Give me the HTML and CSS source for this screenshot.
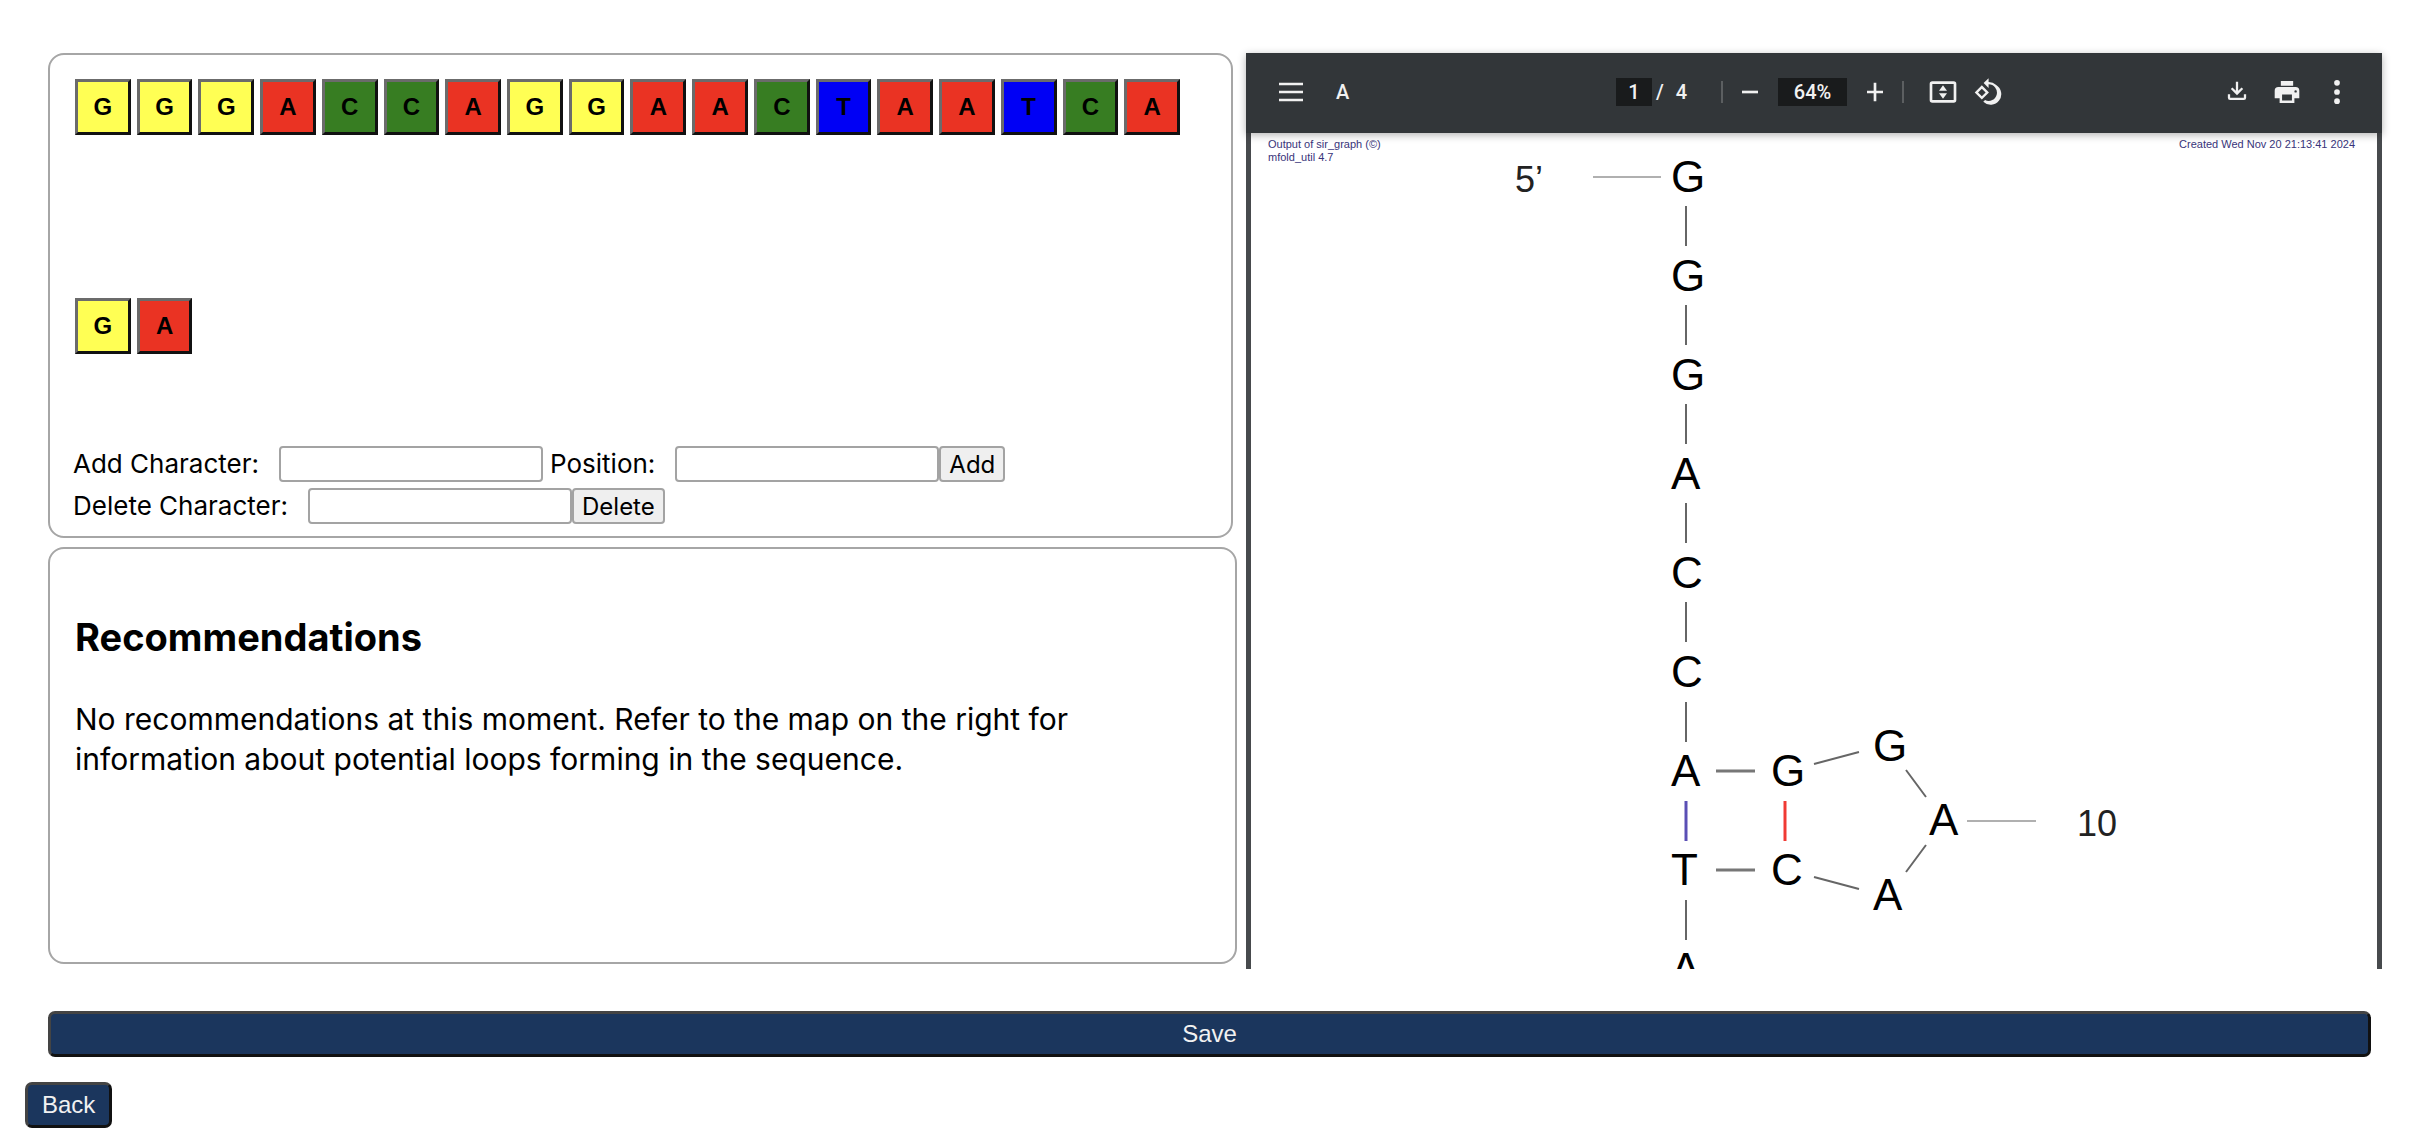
FILE: index.html
```html
<!DOCTYPE html>
<html lang="en">
<head>
<meta charset="utf-8">
<meta name="viewport" content="width=device-width, initial-scale=1">
<title>Sequence editor</title>
<link rel="stylesheet" href="styles.css">
</head>
<body>
<main class="page">
  <div class="workspace">
    <div class="editor">
      <section class="panel sequence-panel" aria-label="Sequence">
        <div class="sequence">
          <button class="base base-g">G</button>
          <button class="base base-g">G</button>
          <button class="base base-g">G</button>
          <button class="base base-a">A</button>
          <button class="base base-c">C</button>
          <button class="base base-c">C</button>
          <button class="base base-a">A</button>
          <button class="base base-g">G</button>
          <button class="base base-g">G</button>
          <button class="base base-a">A</button>
          <button class="base base-a">A</button>
          <button class="base base-c">C</button>
          <button class="base base-t">T</button>
          <button class="base base-a">A</button>
          <button class="base base-a">A</button>
          <button class="base base-t">T</button>
          <button class="base base-c">C</button>
          <button class="base base-a">A</button>
          <button class="base base-g">G</button>
          <button class="base base-a">A</button>
        </div>
        <form class="edit-form">
          <div class="form-row">
            <label for="add-char">Add Character:</label>
            <input class="field" id="add-char" type="text">
            <label class="label-next" for="add-pos">Position:</label>
            <input class="field" id="add-pos" type="text">
            <button class="form-button" type="button">Add</button>
          </div>
          <div class="form-row">
            <label for="del-char">Delete Character:</label>
            <input class="field" id="del-char" type="text">
            <button class="form-button" type="button">Delete</button>
          </div>
        </form>
      </section>
      <section class="panel recommendations">
        <h2>Recommendations</h2>
        <p>No recommendations at this moment. Refer to the map on the right for information about potential loops forming in the sequence.</p>
      </section>
    </div>

    <section class="viewer" aria-label="Structure map">
      <div class="toolbar">
        <div class="tools">
          <button class="icon-button" aria-label="Menu"><svg viewBox="0 0 24 24"><path d="M3 5h18v2H3zM3 11h18v2H3zM3 17h18v2H3z"/></svg></button>
          <span class="doc-title">A</span>
        </div>
        <div class="tools tools-center">
          <input class="page-input" type="text" value="1" aria-label="Page">
          <span class="page-total"><span>/</span><span>4</span></span>
          <span class="divider"></span>
          <button class="icon-button" aria-label="Zoom out"><svg viewBox="0 0 24 24"><path d="M6 11h12v2H6z"/></svg></button>
          <input class="zoom-input" type="text" value="64%" aria-label="Zoom">
          <button class="icon-button" aria-label="Zoom in"><svg viewBox="0 0 24 24"><path d="M11 5h2v6h5v2h-5v6h-2v-6H6v-2h5z"/></svg></button>
          <span class="divider"></span>
          <button class="icon-button" aria-label="Fit to page"><svg viewBox="0 0 24 24"><path fill-rule="evenodd" d="M4 4h16q2 0 2 2v12q0 2-2 2H4q-2 0-2-2V6q0-2 2-2zM4 6v12h16V6zM12 7l3 4H9zM12 17l-3-4h6z"/></svg></button>
          <button class="icon-button" aria-label="Rotate"><svg viewBox="-1 -1 27 27"><path fill-rule="evenodd" d="M7.3 6.9l-6 6 6 6 6-6zM4.100 12.900l3.200-3.200 3.200 3.200-3.200 3.200z"/><path d="M19.400 6.600A9 9 0 0 0 13 4V.8L8.800 5 13 9.200V6a7 7 0 1 1-3 13.300l-1.500 1.500A9 9 0 1 0 19.400 6.600z"/></svg></button>
        </div>
        <div class="tools tools-right">
          <button class="icon-button" aria-label="Download"><svg viewBox="-2 -1 28 28"><path d="M11 4h2v8l3-3 1.400 1.400L12 15.800l-5.400-5.400L8 9l3 3zM6 15v3h12v-3h2v3q0 2-2 2H6q-2 0-2-2v-3z"/></svg></button>
          <button class="icon-button" aria-label="Print"><svg viewBox="-1 -1 26 26"><path fill-rule="evenodd" d="M7 3h10v4H7zM5 8h14q3 0 3 3v6h-4v4H6v-4H2v-6q0-3 3-3zM8 14v5h8v-5zM19 10.500a1 1 0 1 0 0 2 1 1 0 0 0 0-2z"/></svg></button>
          <button class="icon-button" aria-label="More"><svg viewBox="-2 -2 28 28"><circle cx="12" cy="4" r="2.500"/><circle cx="12" cy="12" r="2.500"/><circle cx="12" cy="20" r="2.500"/></svg></button>
        </div>
      </div>
      <svg class="map" viewBox="1251 133 1126 836" role="img" aria-label="Folded sequence">
        <g class="map-note">
          <text x="1268" y="148">Output of sir_graph (©)</text>
          <text x="1268" y="161">mfold_util 4.7</text>
          <text x="2355" y="148" text-anchor="end">Created Wed Nov 20 21:13:41 2024</text>
        </g>
        <g class="map-index">
          <text x="1515" y="192">5’</text>
          <text x="2077" y="836">10</text>
        </g>
        <path class="tick" d="M1593 177H1661M1967 821H2036"/>
        <path class="bond" d="M1686 206v40M1686 305v40M1686 404v40M1686 503v40M1686 602v40M1686 702v40M1686 900v40M1814 764l45-12M1906 770l20 27M1926 845l-20 27M1814 877l45 12"/>
        <path class="bond bond-thick" d="M1716 771h39M1716 870h39"/>
        <path class="pair-at" d="M1686 801v40"/>
        <path class="pair-gc" d="M1785 801v40"/>
        <g class="map-base">
          <text x="1671" y="192">G</text>
          <text x="1671" y="291">G</text>
          <text x="1671" y="390">G</text>
          <text x="1671" y="489">A</text>
          <text x="1671" y="588">C</text>
          <text x="1671" y="687">C</text>
          <text x="1671" y="786">A</text>
          <text x="1671" y="885">T</text>
          <text x="1671" y="984">A</text>
          <text x="1771" y="786">G</text>
          <text x="1771" y="885">C</text>
          <text x="1873" y="761">G</text>
          <text x="1929" y="835">A</text>
          <text x="1873" y="910">A</text>
        </g>
      </svg>
    </section>
  </div>
  <button class="action save">Save</button>
  <button class="action back">Back</button>
</main>
</body>
</html>
```
FILE: styles.css
```css
* { box-sizing: border-box; }

body {
  margin: 0;
  background: #fff;
  color: #000;
  font-family: Inter, "Noto Sans", sans-serif;
}

button, input { font-family: "Liberation Sans", Arial, sans-serif; }

.page {
  display: flex;
  flex-direction: column;
  padding: 53px 36px 16px 48px;
}

.workspace {
  display: grid;
  grid-template-columns: 1189fr 1136fr;
  gap: 9px;
}

.editor {
  display: flex;
  flex-direction: column;
  gap: 9px;
  padding-bottom: 5px;
}

.panel {
  border: 2px solid #a6a6a6;
  border-radius: 16px;
}

.sequence-panel {
  margin-right: 4px;
  padding: 24px 51px 12px 25px;
}

.sequence {
  display: grid;
  grid-template-columns: repeat(18, 1fr);
  gap: 163px 6px;
}

.base {
  height: 56px;
  padding: 0;
  border: 3px solid;
  border-color: #6b6b6b #111 #111 #6b6b6b;
  color: #000;
  font-size: 24px;
  font-weight: bold;
}

.base-g { background: #ffff54; }
.base-a { background: #ea3323; }
.base-c { background: #377d22; }
.base-t { background: #0000f5; }

.edit-form {
  display: flex;
  flex-direction: column;
  gap: 6px;
  margin-top: 92px;
  margin-left: -2px;
}

.form-row {
  display: flex;
  align-items: center;
  font-size: 26px;
  line-height: 36px;
}

.field {
  width: 264px;
  height: 36px;
  margin-left: 20px;
  border: 2px solid #a3a3a3;
  border-radius: 4px;
  font-size: 24px;
}

.label-next { margin-left: 7px; }

.form-button {
  height: 36px;
  padding: 0 8px;
  border: 2px solid #a3a3a3;
  border-radius: 4px;
  background: #efefef;
  color: #000;
  font-family: Inter, sans-serif;
  font-size: 24px;
}

.recommendations {
  flex: 1;
  padding: 64px 120px 24px 25px;
}

.recommendations h2 {
  margin: 0;
  font-size: 38px;
  line-height: 48px;
}

.recommendations p {
  margin: 38px 0 0;
  font-size: 30px;
  line-height: 40px;
}

.viewer { background: #474a4d; }

.toolbar {
  position: relative;
  display: grid;
  grid-template-columns: 1fr auto 1fr;
  align-items: center;
  height: 80px;
  padding: 0 29px 2px;
  background: #323639;
  color: #f1f1f1;
  box-shadow: 0 2px 8px rgba(0, 0, 0, 0.3);
  font-family: Roboto, sans-serif;
  font-size: 20px;
  font-weight: 500;
}

.tools {
  display: flex;
  align-items: center;
}

.tools-center { padding-right: 8px; }

.tools-right {
  justify-content: flex-end;
  gap: 18px;
}

.icon-button {
  width: 32px;
  height: 32px;
  padding: 0;
  border: 0;
  background: none;
}

.icon-button svg {
  display: block;
  width: 100%;
  fill: #f1f1f1;
}

.doc-title { margin-left: 29px; }

.page-input, .zoom-input {
  height: 28px;
  padding: 0;
  border: 0;
  background: #191b1c;
  color: #f1f1f1;
  font: inherit;
  text-align: center;
}

.page-input { width: 36px; }

.zoom-input {
  width: 69px;
  margin: 0 12px;
}

.page-total {
  display: flex;
  gap: 12px;
  margin: 0 34px 0 4px;
}

.divider {
  width: 2px;
  height: 22px;
  margin: 0 11px;
  background: #5c5f61;
}

.page-total + .divider { margin-left: 0; }
.zoom-input ~ .divider { margin-right: 23px; }
.divider + .icon-button + .icon-button { margin-left: 13px; }

.map {
  display: block;
  margin: 0 5px;
  background: #fff;
  font-family: "Liberation Sans", Arial, sans-serif;
}

.map-note { fill: #38347a; font-size: 11px; }
.map-index { fill: #222; font-size: 36px; }
.map-base { fill: #000; font-size: 44px; }

.tick, .bond, .pair-at, .pair-gc {
  fill: none;
  stroke-width: 2;
}

.tick { stroke: #b0b0b0; }
.bond { stroke: #666; }
.bond-thick { stroke: #777; }
.bond-thick, .pair-at, .pair-gc { stroke-width: 3; }
.pair-at { stroke: #5a4fb5; }
.pair-gc { stroke: #f03a34; }

.action {
  height: 46px;
  border: 3px solid;
  border-color: #444 #111 #111 #444;
  border-radius: 7px;
  background: #1b365d;
  color: #f1f1f1;
  font-size: 24px;
}

.save {
  margin: 42px 11px 0 0;
}

.back {
  align-self: flex-start;
  margin: 25px 0 0 -23px;
  padding: 0 14px;
}
```
